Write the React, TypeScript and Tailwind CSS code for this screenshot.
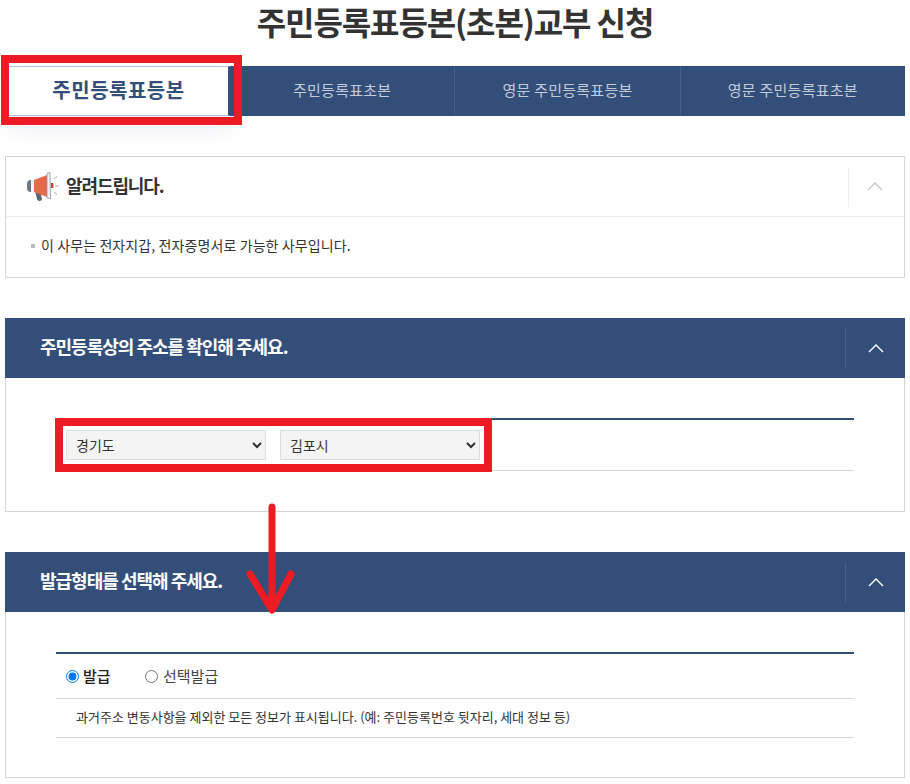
import React from "react";

const Chevron = ({ color }: { color: string }) => (
  <svg width="16" height="9" viewBox="0 0 16 9" fill="none">
    <path d="M1 8 L8 1 L15 8" stroke={color} strokeWidth="1.4" />
  </svg>
);

const Megaphone = () => (
  <svg width="33" height="30" viewBox="0 0 33 30" fill="none">
    <path d="M9 19 L14 19 L16 27 Q16 29 13.5 29 Q11.5 29 11 27 Z" fill="#5b6675" />
    <rect x="1" y="8" width="9" height="12" rx="4" fill="#6d7683" />
    <rect x="5" y="8" width="5" height="12" fill="#f3f3f5" />
    <path d="M8 8 L21 3 L21 25 L8 20 Z" fill="#e8694a" />
    <path d="M21 1.5 L24 0.5 L24.5 27 L21 26 Z" fill="#f1f1f4" stroke="#8b93a3" strokeWidth="0.8" />
    <rect x="25" y="11" width="2.4" height="5" fill="#c8412f" />
    <path d="M28 7 L31 4.5 M29 14 H33 M28 20 L31 22.5" stroke="#9aa2ae" strokeWidth="0.9" />
  </svg>
);

const SectionHeader = ({ title }: { title: string }) => (
  <div className="flex h-[60px] items-center bg-[#344e7a]">
    <h2 className="flex-1 pb-[3px] pl-[35px] text-[18px] font-bold tracking-[-1px] text-white">{title}</h2>
    <div className="flex h-[40px] w-[60px] items-center justify-center border-l border-[#4a618a]">
      <Chevron color="#ffffff" />
    </div>
  </div>
);

export default function App() {
  const tabs = ["주민등록표초본", "영문 주민등록표등본", "영문 주민등록표초본"];
  return (
    <div
      className="relative h-[784px] w-[910px] overflow-hidden bg-white text-[#333]"
      style={{ fontFamily: '"Noto Sans CJK KR", "Noto Sans", sans-serif' }}
    >
      <h1 className="h-[66px] text-center text-[32px] leading-[42px] font-bold tracking-[-1.1px] text-[#333]">
        주민등록표등본(초본)교부 신청
      </h1>

      <div className="ml-[9px] flex h-[50px] w-[896px]">
        <div className="flex w-[221px] items-center justify-center border-y border-r-2 border-y-[#b5c0dc] border-r-[#344e7a] bg-white pb-[2px] text-[20px] font-bold tracking-[0.5px] text-[#344e7a] shadow-[0_10px_20px_rgba(52,78,122,0.12)]">
          주민등록표등본
        </div>
        {tabs.map((t, i) => (
          <div
            key={t}
            className={`flex flex-1 items-center justify-center bg-[#344e7a] pb-[2px] text-[15px] tracking-[0.25px] text-[#c3cbdb] ${i > 0 ? "border-l border-[#46608c]" : ""}`}
          >
            {t}
          </div>
        ))}
      </div>

      <section className="mx-[5px] mt-[40px] h-[122px] border border-[#d5d5d5]">
        <div className="flex h-[60px] items-center border-b border-[#eeeeee]">
          <div className="ml-[20px] mr-[7px]">
            <Megaphone />
          </div>
          <h2 className="flex-1 pb-[2px] text-[18px] font-bold tracking-[-1.1px] text-[#333]">알려드립니다.</h2>
          <div className="flex h-[40px] w-[56px] items-center justify-center border-l border-[#eeeeee] pr-[3px]">
            <Chevron color="#c4c8cf" />
          </div>
        </div>
        <p className="flex h-[60px] items-center pb-[3px] pl-[25px] text-[14px] tracking-[0.1px] text-[#333]">
          <span className="mr-[6px] h-[4px] w-[4px] bg-[#bbbbbb]" />이 사무는 전자지갑, 전자증명서로 가능한 사무입니다.
        </p>
      </section>

      <section className="mx-[5px] mt-[40px]">
        <SectionHeader title="주민등록상의 주소를 확인해 주세요." />
        <div className="h-[134px] border-x border-b border-[#d5d5d5] px-[50px] pt-[40px]">
          <div className="flex h-[53px] items-center gap-[14px] border-t-2 border-b border-t-[#344e7a] border-b-[#d5d5d5] pl-[10px]">
            <select className="h-[30px] w-[200px] border border-[#dddddd] bg-[#f4f4f4] pl-[5px] text-[14px] text-[#333]">
              <option>경기도</option>
            </select>
            <select className="h-[30px] w-[200px] border border-[#dddddd] bg-[#f4f4f4] pl-[5px] text-[14px] text-[#333]">
              <option>김포시</option>
            </select>
          </div>
        </div>
      </section>

      <section className="mx-[5px] mt-[40px]">
        <SectionHeader title="발급형태를 선택해 주세요." />
        <div className="h-[166px] border-x border-b border-[#d5d5d5] px-[50px] pt-[40px]">
          <div className="flex h-[47px] items-center border-t-2 border-b border-t-[#344e7a] border-b-[#d5d5d5] pl-[10px] text-[15px]">
            <label className="flex w-[79px] items-center gap-[4px] font-medium text-[#222]">
              <input type="radio" name="kind" defaultChecked className="m-0 h-[13px] w-[13px]" />
              발급
            </label>
            <label className="flex items-center gap-[5px] text-[#444]">
              <input type="radio" name="kind" className="m-0 h-[13px] w-[13px]" />
              선택발급
            </label>
          </div>
          <p className="flex h-[39px] items-center border-b border-[#d5d5d5] pb-[2px] pl-[20px] text-[13px] text-[#333]">
            과거주소 변동사항을 제외한 모든 정보가 표시됩니다. (예: 주민등록번호 뒷자리, 세대 정보 등)
          </p>
        </div>
      </section>

      <div className="absolute left-[1px] top-[55px] h-[70px] w-[241px] border-[8px] border-[#ed1c24]" />
      <div className="absolute left-[55px] top-[418px] h-[54px] w-[437px] border-[8px] border-[#ed1c24]" />
      <svg className="absolute left-[240px] top-[500px]" width="70" height="120" viewBox="0 0 70 120" fill="none">
        <path d="M32 7 V108 M10 74 L32 110 L51 74" stroke="#ed1c24" strokeWidth="7" strokeLinecap="round" strokeLinejoin="round" />
      </svg>
    </div>
  );
}
